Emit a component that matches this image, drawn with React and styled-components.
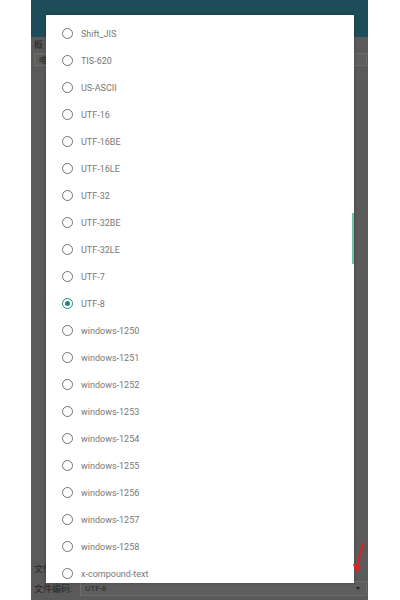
import React from "react";
import styled, { createGlobalStyle } from "styled-components";

const encodings = [
  "Shift_JIS",
  "TIS-620",
  "US-ASCII",
  "UTF-16",
  "UTF-16BE",
  "UTF-16LE",
  "UTF-32",
  "UTF-32BE",
  "UTF-32LE",
  "UTF-7",
  "UTF-8",
  "windows-1250",
  "windows-1251",
  "windows-1252",
  "windows-1253",
  "windows-1254",
  "windows-1255",
  "windows-1256",
  "windows-1257",
  "windows-1258",
  "x-compound-text",
];

const selected = "UTF-8";

const GlobalStyle = createGlobalStyle`
  body {
    margin: 0;
    background: #ffffff;
    font-family: Roboto, "Noto Sans CJK SC", sans-serif;
  }
`;

const Page = styled.div`
  width: 400px;
  height: 600px;
  padding-left: 31px;
  box-sizing: border-box;
`;

const Screen = styled.div`
  position: relative;
  width: 337px;
  height: 600px;
  background: #5a5a5a;
  display: flex;
  flex-direction: column;
  overflow: hidden;
`;

const AppBar = styled.div`
  height: 37px;
  background: #1e4d59;
  display: flex;
  align-items: center;
  padding-left: 40px;
  padding-top: 4px;
  box-sizing: border-box;
  color: #35606a;
  font-size: 11px;
`;

const Field = styled.div`
  display: flex;
  flex-direction: ${(p) => (p.$inline ? "row" : "column")};
  align-items: ${(p) => (p.$inline ? "center" : "stretch")};
  gap: ${(p) => (p.$inline ? "8px" : "2px")};
  padding: 0 1px 0 3px;
`;

const Label = styled.span`
  font-size: 9px;
  color: #252525;
  line-height: 12px;
  white-space: nowrap;
`;

const Input = styled.div`
  flex: 1;
  height: 13px;
  border: 1px solid #6c6c6c;
  background: #5e5e5e;
  display: flex;
  align-items: center;
  justify-content: space-between;
  padding: 0 6px 0 4px;
  font-size: 8px;
  color: #2a2a2a;
`;

const Caret = styled.span`
  width: 0;
  height: 0;
  border-left: 2.5px solid transparent;
  border-right: 2.5px solid transparent;
  border-top: 3px solid #222;
`;

const Spacer = styled.div`
  flex: 1;
`;

const TopForm = styled.div`
  padding-top: 2px;
`;

const BottomForm = styled.div`
  display: flex;
  flex-direction: column;
  gap: 6px;
  padding-bottom: 4px;
`;

const Dialog = styled.div`
  position: absolute;
  top: 15px;
  left: 15px;
  width: 308px;
  height: 568px;
  background: #ffffff;
  overflow: hidden;
  box-shadow: 0 0 3px rgba(0, 0, 0, 0.25);
`;

const List = styled.ul`
  list-style: none;
  margin: 0;
  padding: 5px 0 0;
`;

const Row = styled.li`
  height: 27px;
  display: flex;
  align-items: center;
  gap: 8px;
  padding-left: 16px;
  font-size: 9px;
  color: #787878;
`;

const Radio = styled.span`
  width: 11px;
  height: 11px;
  box-sizing: border-box;
  border-radius: 50%;
  border: 1.4px solid ${(p) => (p.$on ? "#1f8a77" : "#727272")};
  display: flex;
  align-items: center;
  justify-content: center;
  &::after {
    content: "";
    width: 5px;
    height: 5px;
    border-radius: 50%;
    background: ${(p) => (p.$on ? "#1f8a77" : "transparent")};
  }
`;

const ScrollThumb = styled.div`
  position: absolute;
  right: 0;
  top: 198px;
  width: 2px;
  height: 51px;
  background: #6cc5ae;
`;

const Annotation = styled.svg`
  position: absolute;
  left: 318px;
  top: 542px;
`;

export default function App() {
  return (
    <Page>
      <GlobalStyle />
      <Screen>
        <AppBar>编码设置</AppBar>
        <TopForm>
          <Field>
            <Label>概</Label>
            <Input>唯</Input>
          </Field>
        </TopForm>
        <Spacer />
        <BottomForm>
          <Field $inline>
            <Label>文件</Label>
          </Field>
          <Field $inline>
            <Label>文件编码:</Label>
            <Input>
              UTF-8
              <Caret />
            </Input>
          </Field>
        </BottomForm>

        <Dialog>
          <List>
            {encodings.map((name) => (
              <Row key={name}>
                <Radio $on={name === selected} />
                {name}
              </Row>
            ))}
          </List>
          <ScrollThumb />
        </Dialog>

        <Annotation width="20" height="34" viewBox="0 0 20 34">
          <path d="M14 2 L8 24" stroke="#e81c1c" strokeWidth="2" strokeLinecap="round" fill="none" />
          <path d="M4 22 L7 31 L12 24 Z" fill="#e81c1c" />
        </Annotation>
      </Screen>
    </Page>
  );
}
